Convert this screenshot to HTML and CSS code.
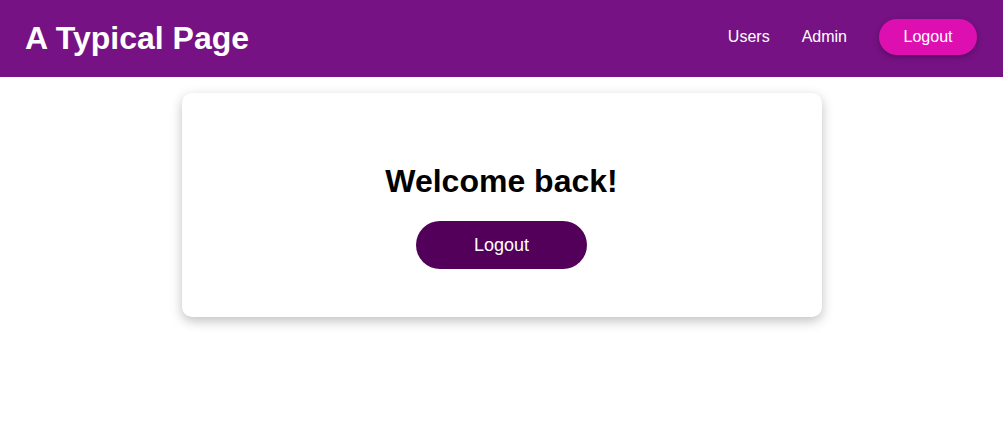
FILE: index.html
```html
<!DOCTYPE html>
<html>
<head>
<meta charset="utf-8">
<link rel="stylesheet" href="styles.css">
</head>
<body>
<header class="topbar">
  <h1 class="brand">A Typical Page</h1>
  <nav class="nav">
    <a class="nav-link" href="#">Users</a>
    <a class="nav-link" href="#">Admin</a>
    <button class="nav-btn">Logout</button>
  </nav>
</header>
<main class="main">
  <section class="card">
    <h2 class="card-title">Welcome back!</h2>
    <button class="card-btn">Logout</button>
  </section>
</main>
</body>
</html>
```
FILE: styles.css
```css
* { box-sizing: border-box; }
body {
  margin: 0;
  font-family: "Liberation Sans", Arial, sans-serif;
  background: #fff;
}
.topbar {
  height: 77px;
  background: #771285;
  display: flex;
  align-items: center;
  justify-content: space-between;
  padding: 0 26px 0 25px;
}
.brand {
  margin: 0;
  color: #fff;
  font-size: 32px;
  font-weight: bold;
}
.nav {
  display: flex;
  align-items: center;
  margin-bottom: 3px;
}
.nav-link {
  color: #fff;
  text-decoration: none;
  font-size: 16px;
  margin-right: 32px;
}
.nav-btn {
  font-family: inherit;
  font-size: 16px;
  color: #fff;
  background: #de0fb0;
  border: none;
  border-radius: 18px;
  width: 98px;
  height: 36px;
  box-shadow: 0 2px 6px rgba(0,0,0,0.3);
}
.main {
  display: flex;
  justify-content: center;
  padding: 16px 0 24px;
}
.card {
  width: 640px;
  height: 224px;
  background: #fff;
  border-radius: 10px;
  box-shadow: 0 4px 12px rgba(0,0,0,0.25);
  display: flex;
  flex-direction: column;
  align-items: center;
  padding-top: 68px;
}
.card-title {
  margin: 0 0 20px;
  font-size: 32px;
  font-weight: bold;
  color: #000;
  line-height: 40px;
}
.card-btn {
  font-family: inherit;
  font-size: 18px;
  color: #fff;
  background: #52005a;
  border: none;
  border-radius: 24px;
  width: 171px;
  height: 48px;
}
```
